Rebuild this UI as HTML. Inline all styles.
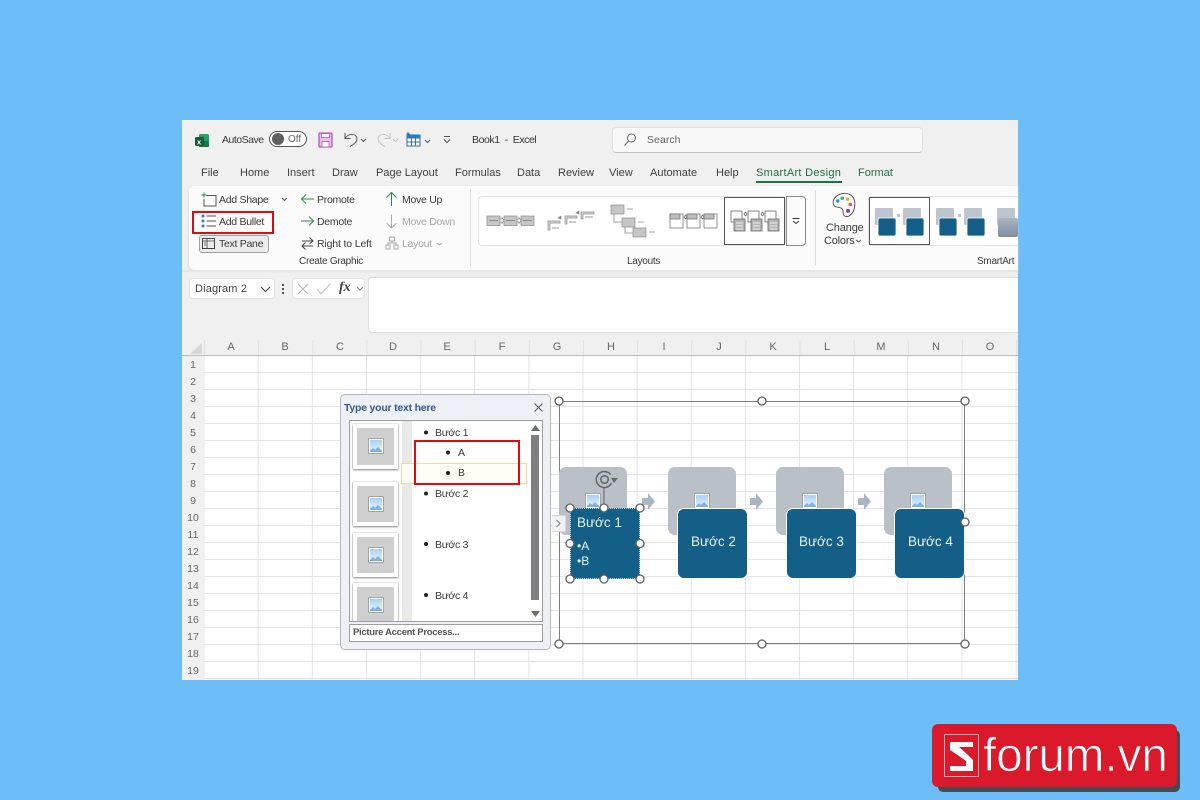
<!DOCTYPE html>
<html><head><meta charset="utf-8">
<style>
html,body{margin:0;padding:0}
body{width:1200px;height:800px;background:#6dbef8;position:relative;overflow:hidden;font-family:"Liberation Sans","DejaVu Sans",sans-serif}
.a{position:absolute}
.t{position:absolute;white-space:nowrap;font-size:10.5px;color:#3a3a3a;line-height:14px;letter-spacing:-.28px}
.m{font-size:11px;color:#404040;letter-spacing:0}
.d{color:#a6a6a6}
.c{transform:translateX(-50%);color:#666;font-size:11px;letter-spacing:0}
.r{transform:translateX(-50%);color:#666;font-size:10.5px;letter-spacing:0}
svg{position:absolute;overflow:visible}
</style></head><body>

<div class="a" style="left:182px;top:120px;width:836px;height:560px;background:#f0f0f0"></div>

<!-- grid -->
<div class="a" style="left:204px;top:356px;width:814px;height:324px;background-color:#fff;background-image:linear-gradient(to right,#e2e2e2 1px,transparent 1px),linear-gradient(to bottom,#e4e4e4 1px,transparent 1px);background-size:54.15px 17px;background-position:-0.5px 16px"></div>
<div class="a" style="left:182px;top:355px;width:836px;height:1px;background:#bdbdbd"></div>
<div class="a" style="left:204px;top:340px;width:814px;height:15px;background-image:linear-gradient(to right,#e0e0e0 1px,transparent 1px);background-size:54.15px 15px"></div>
<svg style="left:0;top:0" width="1200" height="800"><path d="M190 354 L202 354 L202 343 Z" fill="#d8d8d8"/></svg>
<span class="t c" style="left:231px;top:340px">A</span><span class="t c" style="left:285px;top:340px">B</span><span class="t c" style="left:340px;top:340px">C</span><span class="t c" style="left:393px;top:340px">D</span><span class="t c" style="left:447px;top:340px">E</span><span class="t c" style="left:502px;top:340px">F</span><span class="t c" style="left:557px;top:340px">G</span><span class="t c" style="left:611px;top:340px">H</span><span class="t c" style="left:664px;top:340px">I</span><span class="t c" style="left:719px;top:340px">J</span><span class="t c" style="left:773px;top:340px">K</span><span class="t c" style="left:827px;top:340px">L</span><span class="t c" style="left:881px;top:340px">M</span><span class="t c" style="left:936px;top:340px">N</span><span class="t c" style="left:990px;top:340px">O</span>
<span class="t r" style="left:193px;top:358px">1</span><span class="t r" style="left:193px;top:375px">2</span><span class="t r" style="left:193px;top:392px">3</span><span class="t r" style="left:193px;top:409px">4</span><span class="t r" style="left:193px;top:426px">5</span><span class="t r" style="left:193px;top:443px">6</span><span class="t r" style="left:193px;top:460px">7</span><span class="t r" style="left:193px;top:477px">8</span><span class="t r" style="left:193px;top:494px">9</span><span class="t r" style="left:193px;top:511px">10</span><span class="t r" style="left:193px;top:528px">11</span><span class="t r" style="left:193px;top:545px">12</span><span class="t r" style="left:193px;top:562px">13</span><span class="t r" style="left:193px;top:579px">14</span><span class="t r" style="left:193px;top:596px">15</span><span class="t r" style="left:193px;top:613px">16</span><span class="t r" style="left:193px;top:630px">17</span><span class="t r" style="left:193px;top:647px">18</span><span class="t r" style="left:193px;top:664px">19</span>

<!-- title bar -->
<svg style="left:195px;top:134px" width="16" height="14"><rect x="4" y="0" width="10" height="13" rx="1.5" fill="#21a366"/><rect x="4" y="7" width="10" height="6" rx="1" fill="#107c41"/><rect x="0" y="3" width="9" height="9" rx="1.5" fill="#185c37"/><text x="2" y="10.5" font-size="7.5" font-weight="bold" fill="#fff" font-family="Liberation Sans">x</text></svg>
<span class="t" style="left:222px;top:133px;font-size:10.5px;letter-spacing:-.5px">AutoSave</span>
<div class="a" style="left:269px;top:131px;width:38px;height:16px;border:1px solid #555;border-radius:9px;background:#fff;box-sizing:border-box"></div>
<div class="a" style="left:272px;top:133px;width:12px;height:12px;border-radius:50%;background:#5f5f5f"></div>
<span class="t" style="left:288px;top:133px;font-size:10px;color:#666;letter-spacing:0">Off</span>
<svg style="left:318px;top:132px" width="15" height="15" fill="none"><rect x="1" y="1" width="13" height="14" rx="1" fill="#e9bfe9" stroke="#b45bb4" stroke-width="1.3"/><rect x="3.5" y="1.5" width="8" height="4" fill="#fff" stroke="#b45bb4" stroke-width=".8"/><rect x="4" y="9.500" width="7" height="5.500" fill="#fff" stroke="#b45bb4" stroke-width=".8"/></svg>
<svg style="left:342px;top:131px" width="30" height="17" fill="none" stroke="#555" stroke-width="1"><path d="M3 2 V7.500 H8.500 M3 7.500 C6 2 15 2 15 8 C15 11 11 14 8 15.500"/><path d="M19 8 l2.500 2.500 l2.500 -2.500"/></svg>
<svg style="left:375px;top:131px" width="30" height="17" fill="none" stroke="#c4c4c4" stroke-width="1"><path d="M15 2 V7.500 H9.500 M15 7.500 C12 2 3 2 3 8 C3 11 7 14 10 15.500"/><path d="M18 8 l2.500 2.500 l2.500 -2.500"/></svg>
<svg style="left:405px;top:132px" width="30" height="15" fill="none"><rect x="2" y="3" width="13" height="11" fill="#fff" stroke="#3a6ea5"/><rect x="2" y="3" width="13" height="3.500" fill="#1f7ad0"/><path d="M6.500 3 V14 M10.500 3 V14 M2 10 H15" stroke="#3a6ea5"/><path d="M3 0 V4 M1.500 2 H5" stroke="#1f7ad0"/><path d="M20 8 l2.500 2.500 l2.500 -2.500" stroke="#555"/></svg>
<svg style="left:442px;top:135px" width="10" height="10" fill="none" stroke="#555"><path d="M2 1.500 H8 M2 4.500 l3 3 l3 -3"/></svg>
<span class="t" style="left:472px;top:133px;font-size:10.5px;color:#333;letter-spacing:-.42px">Book1&nbsp; -&nbsp; Excel</span>
<div class="a" style="left:612px;top:127px;width:311px;height:26px;background:#f8f8f8;border:1px solid #e0e0e0;border-bottom-color:#c2c2c2;border-radius:4px;box-sizing:border-box"></div>
<svg style="left:623px;top:133px" width="14" height="14" fill="none" stroke="#666" stroke-width="1"><circle cx="8.500" cy="5" r="4"/><path d="M5.500 8 L1.500 12.500"/></svg>
<span class="t" style="left:647px;top:133px;font-size:10.5px;color:#666;letter-spacing:.05px">Search</span>

<!-- tabs -->
<span class="t m" style="left:201px;top:166px">File</span><span class="t m" style="left:240px;top:166px">Home</span><span class="t m" style="left:287px;top:166px">Insert</span><span class="t m" style="left:332px;top:166px">Draw</span><span class="t m" style="left:376px;top:166px">Page Layout</span><span class="t m" style="left:455px;top:166px">Formulas</span><span class="t m" style="left:517px;top:166px">Data</span><span class="t m" style="left:558px;top:166px">Review</span><span class="t m" style="left:609px;top:166px">View</span><span class="t m" style="left:650px;top:166px">Automate</span><span class="t m" style="left:716px;top:166px">Help</span>
<span class="t m" style="left:756px;top:166px;color:#1e6e42;letter-spacing:.3px">SmartArt Design</span>
<div class="a" style="left:756px;top:181px;width:86px;height:2px;background:#1e7145"></div>
<span class="t m" style="left:858px;top:166px;color:#1e7145">Format</span>

<!-- ribbon -->
<div class="a" style="left:189px;top:186px;width:829px;height:84px;background:#fbfbfb;border-radius:5px 0 0 5px;box-shadow:0 1px 2px #c9c9c9"></div>

<svg style="left:201px;top:192px" width="16" height="15" fill="none"><path d="M5 3.500 H15 V14 H3 V7" stroke="#555"/><path d="M3 0.500 V5.500 M0.500 3 H5.500" stroke="#2a8a50"/></svg>
<span class="t" style="left:219px;top:193px">Add Shape</span>
<svg style="left:281px;top:197px" width="8" height="5" fill="none" stroke="#555"><path d="M1 1 l2.500 2.500 l2.500 -2.500"/></svg>
<svg style="left:201px;top:214px" width="16" height="14" fill="none"><path d="M5.500 2 H15 M5.500 7 H15 M5.500 12 H15" stroke="#555"/><circle cx="2" cy="2" r="1.500" fill="#2b7cd3"/><circle cx="2" cy="7" r="1.500" fill="#2b7cd3"/><circle cx="2" cy="12" r="1.500" fill="#2b7cd3"/></svg>
<span class="t" style="left:219px;top:215px">Add Bullet</span>
<div class="a" style="left:192px;top:211px;width:82px;height:23px;border:2px solid #e00b12;box-sizing:border-box"></div>
<div class="a" style="left:199px;top:235px;width:70px;height:18px;border:1px solid #a0a0a0;border-radius:3px;background:#ececec;box-sizing:border-box"></div>
<svg style="left:201px;top:237px" width="15" height="13" fill="none" stroke="#444"><rect x="1.500" y="1.500" width="12" height="10"/><path d="M6 1.500 V11.500 M1.500 4 H13.500 M3 6 H5 M3 8 H5" stroke-width=".8"/></svg>
<span class="t" style="left:219px;top:237px">Text Pane</span>

<svg style="left:300px;top:193px" width="15" height="12" fill="none" stroke="#2a8a50"><path d="M14 6 H1.500 M6 1.500 L1.500 6 L6 10.500"/></svg>
<span class="t" style="left:317px;top:193px">Promote</span>
<svg style="left:300px;top:215px" width="15" height="12" fill="none" stroke="#2a8a50"><path d="M1 6 H13.500 M9 1.500 L13.500 6 L9 10.500"/></svg>
<span class="t" style="left:317px;top:215px">Demote</span>
<svg style="left:300px;top:236px" width="15" height="15" fill="none" stroke="#444"><path d="M2 5 H13 M9.500 1.500 L13 5 L9.500 8 M13 10 H2 M5.500 6.500 L2 10 L5.500 13.500"/></svg>
<span class="t" style="left:317px;top:237px;letter-spacing:-.15px">Right to Left</span>
<span class="t" style="left:299px;top:255px;font-size:10px">Create Graphic</span>

<svg style="left:385px;top:191px" width="13" height="16" fill="none" stroke="#2a8a50"><path d="M6.500 15 V1.500 M1.500 6.500 L6.500 1.500 L11.500 6.500"/></svg>
<span class="t" style="left:402px;top:193px">Move Up</span>
<svg style="left:385px;top:214px" width="13" height="15" fill="none" stroke="#aaa"><path d="M6.500 0.500 V14 M1.500 9 L6.500 14 L11.500 9"/></svg>
<span class="t d" style="left:402px;top:215px">Move Down</span>
<svg style="left:385px;top:236px" width="14" height="14" fill="none" stroke="#aaa"><rect x="4.500" y="1" width="5" height="4"/><rect x="1" y="9" width="4" height="4"/><rect x="9" y="9" width="4" height="4"/><path d="M7 5 V7 H3 V9 M7 7 H11 V9"/></svg>
<span class="t d" style="left:402px;top:237px">Layout</span>
<svg style="left:436px;top:242px" width="7" height="5" fill="none" stroke="#aaa"><path d="M1 1 l2.500 2 l2.500 -2"/></svg>

<div class="a" style="left:470px;top:189px;width:1px;height:77px;background:#dcdcdc"></div>

<!-- layouts gallery -->
<div class="a" style="left:478px;top:196px;width:308px;height:50px;background:#fff;border:1px solid #e2e2e2;border-radius:4px;box-sizing:border-box"></div>
<svg style="left:0;top:0" width="1200" height="800" fill="none">
  <g fill="#c6c6c6" stroke="#8a8a8a" stroke-width=".7">
    <rect x="487" y="216" width="13" height="9.500"/><rect x="504" y="216" width="13" height="9.500"/><rect x="521" y="216" width="13" height="9.500"/>
    <path d="M500 219 h2 v-1.500 l2 3 l-2 3 v-1.500 h-2z" fill="#fff"/><path d="M517 219 h2 v-1.500 l2 3 l-2 3 v-1.500 h-2z" fill="#fff"/>
    <path d="M548 230 v-9 h12 v2 h-10 v7z M565 224 v-8 h12 v2 h-10 v6z M581 219 v-7 h13 v2 h-11 v5z" fill="#d6d6d6"/>
    <path d="M558 218 l3 -2 v3z M576 213 l3 -2 v3z" fill="#777"/>
    <rect x="611" y="205" width="13" height="9"/><rect x="622" y="218" width="13" height="9"/><rect x="633" y="228" width="13" height="9"/>
  </g>
  <path d="M489 220.500h9M506 220.500h9M523 220.500h9M552 228h7M569 222h7M585 217h8" stroke="#777" stroke-width=".7"/>
  <path d="M614 214 v8 h8 M625 227 v6 h8 M627 209h6M638 222h6M649 232h6" stroke="#888" stroke-width=".8"/>
  <g stroke="#777" stroke-width=".8">
    <rect x="670" y="214" width="13" height="14" fill="#fff"/><rect x="687" y="214" width="13" height="14" fill="#fff"/><rect x="704" y="214" width="13" height="14" fill="#fff"/>
    <rect x="670" y="214" width="10" height="5" fill="#bdbdbd"/><rect x="687" y="214" width="10" height="5" fill="#bdbdbd"/><rect x="704" y="214" width="10" height="5" fill="#bdbdbd"/>
    <path d="M684 217 l1.500 -2 l1.500 2 l-1.500 2z M701 217 l1.500 -2 l1.500 2 l-1.500 2z"/>
  </g>
  <rect x="724.500" y="197.500" width="60" height="47" stroke="#555"/>
  <g stroke="#666" stroke-width=".8">
    <rect x="731" y="211" width="11" height="11" fill="#fff"/><rect x="748" y="211" width="11" height="11" fill="#fff"/><rect x="765" y="211" width="11" height="11" fill="#fff"/>
    <rect x="734" y="219" width="11" height="12" fill="#b5b5b5"/><rect x="751" y="219" width="11" height="12" fill="#b5b5b5"/><rect x="768" y="219" width="11" height="12" fill="#b5b5b5"/>
    <path d="M744 214 l1.500 -2 l1.500 2 l-1.500 2z M761 214 l1.500 -2 l1.500 2 l-1.500 2z"/>
  </g>
  <path d="M736 223h7M736 226h7M736 229h7M753 223h7M753 226h7M753 229h7M770 223h7M770 226h7M770 229h7" stroke="#fff" stroke-width=".8"/>
  <path d="M792.500 218.500h7M793 221l3 2.500 l3 -2.500" stroke="#333"/>
</svg>
<div class="a" style="left:786px;top:196px;width:20px;height:50px;border:1px solid #8c8c8c;border-radius:0 4px 4px 0;box-sizing:border-box"></div>
<span class="t" style="left:627px;top:255px;font-size:10px">Layouts</span>
<div class="a" style="left:815px;top:190px;width:1px;height:75px;background:#dcdcdc"></div>

<!-- change colors -->
<svg style="left:831px;top:192px" width="26" height="26" viewBox="0 0 28 29" fill="none"><path d="M14 1.500 C22 1 27 7 26 15 C25.500 23 20 29 15 27 C11 25 15 20 11 18 C7 16 3 18 2 13 C1 7 7 2 14 1.500Z" fill="#fff" stroke="#555" stroke-width="1.100"/><circle cx="7" cy="10" r="2" fill="#2f9bd8"/><circle cx="12" cy="7" r="2" fill="#3bb56c"/><circle cx="18" cy="8" r="2" fill="#f2a33a"/><circle cx="21" cy="14" r="2" fill="#e0564a"/><circle cx="18.500" cy="21" r="2.200" fill="#7a3fa0"/></svg>
<span class="t" style="left:826px;top:221px;font-size:11px;letter-spacing:-.15px">Change</span>
<span class="t" style="left:824px;top:234px;font-size:11px;letter-spacing:-.2px">Colors</span>
<svg style="left:855px;top:239px" width="7" height="5" fill="none" stroke="#555"><path d="M1 1 l2.500 2 l2.500 -2"/></svg>

<!-- smartart styles -->
<div class="a" style="left:868px;top:196px;width:150px;height:50px;background:#fff;border:1px solid #e2e2e2;border-right:0;border-radius:4px 0 0 4px;box-sizing:border-box"></div>
<div class="a" style="left:869px;top:197px;width:61px;height:48px;border:1px solid #555;box-sizing:border-box"></div>
<svg style="left:0;top:0" width="1200" height="800">
  <g fill="#bcc4cd"><rect x="875" y="208" width="18" height="17" rx="1"/><rect x="903" y="208" width="18" height="17" rx="1"/><rect x="936" y="208" width="18" height="17" rx="1"/><rect x="964" y="208" width="18" height="17" rx="1"/><rect x="997" y="208" width="18" height="17" rx="1"/><rect x="897" y="214" width="3" height="3"/><rect x="958" y="214" width="3" height="3"/></g>
  <g fill="#135f88" stroke="#fff" stroke-width=".8"><rect x="878" y="218" width="18" height="18" rx="2"/><rect x="906" y="218" width="18" height="18" rx="2"/><rect x="939" y="218" width="18" height="18" rx="2"/><rect x="967" y="218" width="18" height="18" rx="2"/></g>
  <defs><linearGradient id="g1" x1="0" y1="0" x2="0" y2="1"><stop offset="0" stop-color="#a9b5c1"/><stop offset="1" stop-color="#7d90a2"/></linearGradient></defs>
  <rect x="998" y="218" width="20" height="19" rx="2" fill="url(#g1)"/>
</svg>
<span class="t" style="left:977px;top:255px;font-size:10px">SmartArt</span>
<div class="a" style="left:182px;top:270px;width:836px;height:2px;background:#e6e6e6"></div>

<!-- formula bar -->
<div class="a" style="left:189px;top:278px;width:86px;height:21px;background:#fff;border-radius:4px;border:1px solid #e4e4e4;box-sizing:border-box"></div>
<span class="t" style="left:195px;top:282px;font-size:11px;color:#444;letter-spacing:.15px">Diagram 2</span>
<svg style="left:260px;top:286px" width="11" height="7" fill="none" stroke="#444" stroke-width="1.100"><path d="M1 1 l4.500 4.500 l4.500 -4.500"/></svg>
<svg style="left:282px;top:284px" width="3" height="11" fill="#555"><rect width="2" height="2"/><rect y="4" width="2" height="2"/><rect y="8" width="2" height="2"/></svg>
<div class="a" style="left:292px;top:278px;width:73px;height:21px;background:#fff;border-radius:4px;border:1px solid #e4e4e4;box-sizing:border-box"></div>
<svg style="left:297px;top:282px" width="70" height="14" fill="none"><path d="M1 2 L11 12 M11 2 L1 12" stroke="#b5b5b5" stroke-width="1.100"/><path d="M20 7 L24 12 L33 2" stroke="#c4c4c4" stroke-width="1.100"/><path d="M60 5 l3 3 l3 -3" stroke="#888"/></svg>
<span class="t" style="left:339px;top:281px;font-family:'Liberation Serif',serif;font-style:italic;font-weight:bold;font-size:14px;color:#444;letter-spacing:0">fx</span>
<div class="a" style="left:368px;top:277px;width:650px;height:56px;background:#fff;border:1px solid #dcdcdc;border-right:0;border-radius:4px 0 0 4px;box-sizing:border-box"></div>

<!-- SmartArt frame -->
<div class="a" style="left:559px;top:401px;width:406px;height:243px;border:1px solid #7f7f7f;box-sizing:border-box"></div>

<!-- image backs -->
<div class="a" style="left:559px;top:467px;width:68px;height:68px;background:#b9c0c8;border-radius:7px"></div>
<div class="a" style="left:668px;top:467px;width:68px;height:68px;background:#b9c0c8;border-radius:7px"></div>
<div class="a" style="left:776px;top:467px;width:68px;height:68px;background:#b9c0c8;border-radius:7px"></div>
<div class="a" style="left:884px;top:467px;width:68px;height:68px;background:#b9c0c8;border-radius:7px"></div>
<svg style="left:0;top:0" width="1200" height="800">
  <defs><linearGradient id="p" x1="0" y1="0" x2="0" y2="1"><stop offset="0" stop-color="#a8d0f4"/><stop offset="1" stop-color="#eaf3fb"/></linearGradient>
  <g id="pic"><rect x="0.500" y="0.500" width="15" height="15" fill="#fff" stroke="#9aa6b3"/><rect x="2" y="2" width="12" height="12" fill="url(#p)"/><path d="M2 13 l3 -3 l2 2 l3 -3 l4 4 v1 h-12z" fill="#7fb0e2"/></g></defs>
  <use href="#pic" x="585" y="493"/><use href="#pic" x="694" y="493"/><use href="#pic" x="802" y="493"/><use href="#pic" x="910" y="493"/>
  <g fill="#a9b6c4"><path d="M642 498 h6 v-5 l7 8.500 l-7 8.500 v-5 h-6z"/><path d="M750 498 h6 v-5 l7 8.500 l-7 8.500 v-5 h-6z"/><path d="M858 498 h6 v-5 l7 8.500 l-7 8.500 v-5 h-6z"/></g>
</svg>

<!-- blue cards -->
<div class="a" style="left:570px;top:508px;width:70px;height:71px;background:#135f88;border-radius:2px;border:1px dotted #cfdde6;box-sizing:border-box"></div>
<div class="a" style="left:677px;top:508px;width:71px;height:71px;background:#135f88;border-radius:7px;border:1px solid #fff;box-sizing:border-box"></div>
<div class="a" style="left:786px;top:508px;width:71px;height:71px;background:#135f88;border-radius:7px;border:1px solid #fff;box-sizing:border-box"></div>
<div class="a" style="left:894px;top:508px;width:71px;height:71px;background:#135f88;border-radius:7px;border:1px solid #fff;box-sizing:border-box"></div>
<span class="t" style="left:577px;top:515px;font-size:13.500px;line-height:16px;color:#e8f3fa;letter-spacing:0">Bước 1</span>
<span class="t" style="left:577px;top:539px;font-size:12px;color:#e8f3fa;letter-spacing:0">•A</span>
<span class="t" style="left:577px;top:554px;font-size:12px;color:#e8f3fa;letter-spacing:0">•B</span>
<span class="t" style="left:691px;top:534px;font-size:13.500px;line-height:16px;color:#e8f3fa;letter-spacing:0">Bước 2</span>
<span class="t" style="left:799px;top:534px;font-size:13.500px;line-height:16px;color:#e8f3fa;letter-spacing:0">Bước 3</span>
<span class="t" style="left:908px;top:534px;font-size:13.500px;line-height:16px;color:#e8f3fa;letter-spacing:0">Bước 4</span>

<!-- handles -->
<svg style="left:0;top:0" width="1200" height="800" fill="#fff" stroke="#5f5f5f" stroke-width="1.300">
  <circle cx="559" cy="401" r="4"/><circle cx="762" cy="401" r="4"/><circle cx="965" cy="401" r="4"/><circle cx="965" cy="522" r="4"/><circle cx="559" cy="644" r="4"/><circle cx="762" cy="644" r="4"/><circle cx="965" cy="644" r="4"/>
  <path d="M604 488 V507" fill="none" stroke="#777"/>
  <circle cx="570" cy="508" r="4"/><circle cx="604" cy="508" r="4"/><circle cx="640" cy="508" r="4"/><circle cx="570" cy="543.500" r="4"/><circle cx="640" cy="543.500" r="4"/><circle cx="570" cy="579" r="4"/><circle cx="604" cy="579" r="4"/><circle cx="640" cy="579" r="4"/>
  <g fill="none" stroke="#666" stroke-width="1.500"><path d="M611.500 483 A8 8 0 1 1 610.500 474.500"/><circle cx="604.500" cy="479.500" r="3.800"/><path d="M611 478 H618 L614 483Z" fill="#666" stroke="none"/></g>
</svg>

<!-- collapse tab -->
<div class="a" style="left:552px;top:515px;width:14px;height:17px;background:#f0f1f5;border:1px solid #d8d8d8;border-left:0;box-sizing:border-box"></div>
<svg style="left:555px;top:519px" width="7" height="9" fill="none" stroke="#888" stroke-width="1.200"><path d="M1.500 1 L5 4.500 L1.500 8"/></svg>

<!-- text pane -->
<div class="a" style="left:340px;top:394px;width:211px;height:256px;background:#eef0f6;border:1px solid #b4b8c0;border-radius:5px;box-sizing:border-box"></div>
<span class="t" style="left:344px;top:401px;font-size:10.500px;font-weight:bold;color:#2f5a93;letter-spacing:-.22px">Type your text here</span>
<svg style="left:533px;top:402px" width="11" height="11" fill="none" stroke="#555" stroke-width="1"><path d="M1.500 1.500 L9.500 9.500 M9.500 1.500 L1.500 9.500"/></svg>
<div class="a" style="left:349px;top:420px;width:194px;height:202px;background:#fff;border:1px solid #9b9ea3;box-sizing:border-box;overflow:hidden">
  <div class="a" style="left:52px;top:0;width:10px;height:200px;background:#e9e9e9"></div>
  <div class="a" style="left:3px;top:3px;width:37px;height:37px;background:#cfcfcf;border:4px solid #fff;box-shadow:0 1px 2px #888,0 0 1px #999"></div>
  <div class="a" style="left:3px;top:61px;width:37px;height:36px;background:#cfcfcf;border:4px solid #fff;box-shadow:0 1px 2px #888,0 0 1px #999"></div>
  <div class="a" style="left:3px;top:112px;width:37px;height:36px;background:#cfcfcf;border:4px solid #fff;box-shadow:0 1px 2px #888,0 0 1px #999"></div>
  <div class="a" style="left:3px;top:162px;width:37px;height:37px;background:#cfcfcf;border:4px solid #fff;box-shadow:0 1px 2px #888,0 0 1px #999"></div>
  <svg style="left:0;top:0" width="70" height="200">
    <use href="#pic" x="18" y="17"/><use href="#pic" x="18" y="75"/><use href="#pic" x="18" y="126"/><use href="#pic" x="18" y="176"/>
  </svg>
</div>
<div class="a" style="left:401px;top:463px;width:126px;height:21px;background:#fffdf6;border:1px solid #f6d79b;box-sizing:border-box"></div>
<div class="a" style="left:531px;top:435px;width:8px;height:165px;background:#7f7f7f"></div>
<svg style="left:530px;top:423px" width="11" height="198" fill="#6f6f6f"><path d="M1 8 L5.500 2 L10 8Z"/><path d="M1 188 L5.500 194 L10 188Z"/></svg>
<svg style="left:0;top:0" width="1200" height="800" fill="#222"><circle cx="426" cy="432.500" r="2"/><circle cx="448" cy="452.500" r="2"/><circle cx="448" cy="473" r="2"/><circle cx="426" cy="493.500" r="2"/><circle cx="426" cy="544" r="2"/><circle cx="426" cy="595" r="2"/></svg>
<span class="t" style="left:435px;top:426px;letter-spacing:-.3px">Bước 1</span>
<span class="t" style="left:458px;top:446px">A</span>
<span class="t" style="left:458px;top:466px">B</span>
<span class="t" style="left:435px;top:487px;letter-spacing:-.3px">Bước 2</span>
<span class="t" style="left:435px;top:538px;letter-spacing:-.3px">Bước 3</span>
<span class="t" style="left:435px;top:589px;letter-spacing:-.3px">Bước 4</span>
<div class="a" style="left:414px;top:440px;width:106px;height:45px;border:2px solid #e00b12;box-sizing:border-box"></div>
<div class="a" style="left:349px;top:624px;width:194px;height:18px;background:#fff;border:1px solid #9b9ea3;box-sizing:border-box"></div>
<span class="t" style="left:353px;top:626px;font-size:9.500px;font-weight:bold;color:#555;letter-spacing:-.3px">Picture Accent Process...</span>

<!-- logo -->
<div class="a" style="left:938px;top:730px;width:242px;height:62px;background:#3f4b55;border-radius:5px"></div>
<div class="a" style="left:932px;top:724px;width:245px;height:63px;background:#da1a2b;border-radius:6px"></div>
<div class="a" style="left:944px;top:734px;width:35px;height:43px;border:1px solid #f5a7ad;box-sizing:border-box"></div>
<svg style="left:950px;top:742px" width="24" height="30" fill="#fff"><path d="M0 0 H23 V5 H9 L18 13 L23 18 V29 H0 V24 H16 V19 L9 14 L0 8Z"/></svg>
<span class="t" style="left:983px;top:726px;font-size:47.500px;line-height:60px;color:#fff;letter-spacing:0;-webkit-text-stroke:.8px #da1a2b">forum.vn</span>

</body></html>
